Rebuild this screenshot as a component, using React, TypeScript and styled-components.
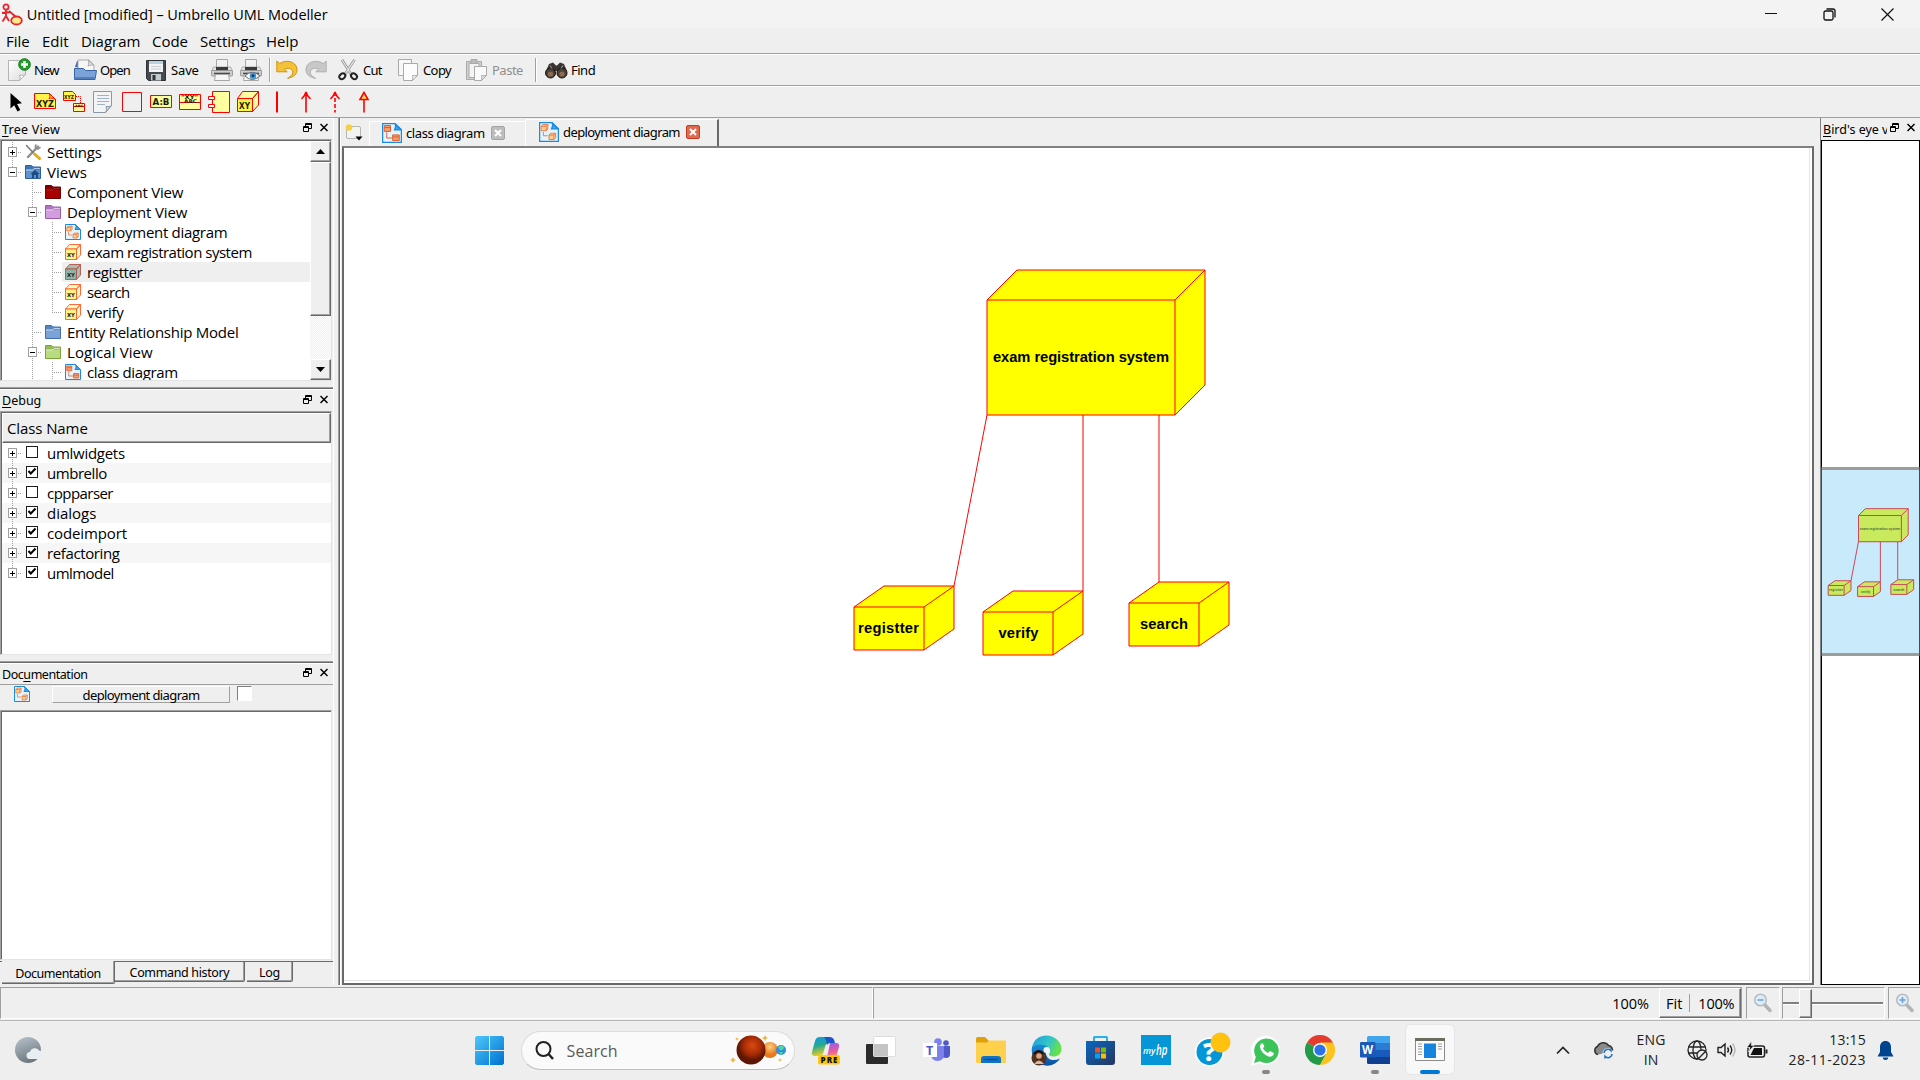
import React from 'react';
import styled, { createGlobalStyle, css } from 'styled-components';

const segoe = `"Open Sans", "Noto Sans", sans-serif`;
const tahoma = `"Noto Sans", "Open Sans", sans-serif`;

const GlobalStyle = createGlobalStyle`
  * { box-sizing: border-box; }
  body { margin: 0; background: #efefef; overflow: hidden; }
  svg { display: block; flex: none; }
`;

/* ---------- text ---------- */

const Label = styled.span<{ $ls?: number; $size?: number; $color?: string; $tahoma?: boolean; $w?: number; $top?: number }>`
  font-family: ${p => (p.$tahoma ? tahoma : segoe)};
  font-size: ${p => p.$size ?? 15}px;
  letter-spacing: ${p => p.$ls ?? 0}px;
  color: ${p => p.$color ?? '#000'};
  white-space: pre;
  line-height: 20px;
  flex: none;
  padding-top: ${p => p.$top ?? 0}px;
  ${p => p.$w !== undefined && css`width: ${p.$w}px;`}
`;

const Accel = styled.span`
  text-decoration: underline;
  text-underline-offset: 2px;
`;

/* ---------- frame ---------- */

const Screen = styled.div`
  width: 1920px;
  height: 1080px;
  display: flex;
  flex-direction: column;
  background: #efefef;
  overflow: hidden;
`;

const TitleBar = styled.header`
  height: 28px;
  flex: none;
  background: #f3f3f3;
  display: flex;
  align-items: center;
  padding-left: 1px;
`;

const WindowButtons = styled.div`
  margin-left: auto;
  display: flex;
  padding-right: 3px;
`;

const WindowButton = styled.div`
  width: 58.5px;
  height: 28px;
  display: flex;
  align-items: center;
  justify-content: center;
`;

const MenuBar = styled.nav`
  height: 26px;
  flex: none;
  display: flex;
  align-items: center;
  padding-left: 6px;
  border-bottom: 1px solid #a0a0a0;
`;

const Toolbar = styled.div<{ $pad: number }>`
  height: 32px;
  flex: none;
  display: flex;
  align-items: center;
  padding-left: ${p => p.$pad}px;
  border-top: 1px solid #fff;
  border-bottom: 1px solid #a0a0a0;
`;

const ToolButton = styled.div<{ $w: number; $gap?: number }>`
  width: ${p => p.$w}px;
  flex: none;
  display: flex;
  align-items: center;
  gap: ${p => p.$gap ?? 4}px;
`;

const ToolSeparator = styled.div<{ $after: number }>`
  width: 2px;
  height: 24px;
  flex: none;
  border-left: 1px solid #a0a0a0;
  border-right: 1px solid #fff;
  margin-right: ${p => p.$after}px;
`;

const Main = styled.div`
  height: 867px;
  flex: none;
  display: flex;
`;

/* ---------- docks ---------- */

const LeftDock = styled.aside`
  width: 334px;
  flex: none;
  display: flex;
  flex-direction: column;
  border-right: 1px solid #fff;
`;

const DockTitle = styled.div<{ $h: number; $top?: boolean }>`
  height: ${p => p.$h}px;
  flex: none;
  display: flex;
  align-items: center;
  padding: 0 5px 0 2px;
  border-top: 1px solid #fff;
  ${p => p.$top && css`box-shadow: 0 -1px #696969, 0 -2px #a0a0a0;`}
`;

const DockButtons = styled.div`
  margin-left: auto;
  display: flex;
  gap: 8px;
  padding-bottom: 3px;
`;

const Sunken = styled.div<{ $h: number }>`
  height: ${p => p.$h}px;
  width: 332px;
  flex: none;
  background: #fff;
  overflow: hidden;
  border-style: solid;
  border-width: 1px;
  border-color: #a0a0a0 #e3e3e3 #e3e3e3 #a0a0a0;
  box-shadow: inset 1px 1px #696969;
  padding: 1px 0 0 1px;
  display: flex;
`;

const Spacer = styled.div<{ $h: number }>`
  height: ${p => p.$h}px;
  flex: none;
`;

const TreeRows = styled.div`
  flex: 1;
  padding-top: 1px;
`;

const Row = styled.div<{ $alt?: boolean }>`
  height: 20px;
  display: flex;
  align-items: center;
  background: ${p => (p.$alt ? '#f6f6f6' : 'transparent')};
`;

const RowContent = styled.div<{ $selected?: boolean }>`
  flex: 1;
  height: 20px;
  display: flex;
  align-items: center;
  padding-left: 3px;
  gap: 6px;
  background: ${p => (p.$selected ? '#efefef' : 'transparent')};
`;

const ScrollBar = styled.div`
  width: 21px;
  flex: none;
  display: flex;
  flex-direction: column;
  background: repeating-conic-gradient(#fff 0 25%, #efefef 0 50%) 0 0 / 2px 2px;
`;

const raised = css`
  background: #efefef;
  border-style: solid;
  border-width: 1px;
  border-color: #fff #696969 #696969 #fff;
  box-shadow: inset -1px -1px #a0a0a0;
`;

const ScrollPart = styled.div<{ $h: number; $last?: boolean }>`
  height: ${p => p.$h}px;
  flex: none;
  ${raised}
  display: flex;
  align-items: center;
  justify-content: center;
  ${p => p.$last && css`margin-top: auto;`}
`;

const DebugList = styled.div`
  flex: 1;
`;

const ColumnHeader = styled.div`
  height: 30px;
  ${raised}
  display: flex;
  align-items: center;
  padding-left: 4px;
`;

const CheckBox = styled.div`
  width: 12px;
  height: 12px;
  border: 1px solid #1c1c1c;
  background: #fff;
  margin: 0 3px 3px 1px;
`;

const DocHeader = styled.div`
  height: 26px;
  flex: none;
  display: flex;
  align-items: flex-start;
  border-top: 1px solid #a0a0a0;
  padding: 1px 0 0 14px;
`;

const DocName = styled.div`
  width: 178px;
  height: 17px;
  margin-left: 22px;
  border: 1px solid;
  border-color: #fff #a0a0a0 #a0a0a0 #fff;
  display: flex;
  align-items: center;
  justify-content: center;
`;

const DocCheck = styled.div`
  width: 15px;
  height: 15px;
  margin: 0 0 0 7px;
  background: #fff;
  border: 1px solid;
  border-color: #808080 #fff #fff #808080;
`;

const BottomTabs = styled.div`
  height: 24px;
  margin-top: 1px;
  flex: none;
  display: flex;
  align-items: flex-start;
  padding-left: 2px;
  box-shadow: inset 0 1px #696969;
`;

const BottomTab = styled.div<{ $w: number; $active?: boolean; $gap?: number }>`
  width: ${p => p.$w}px;
  height: ${p => (p.$active ? 23 : 21)}px;
  margin-right: ${p => p.$gap ?? 0}px;
  display: flex;
  align-items: center;
  justify-content: center;
  background: #efefef;
  border-style: solid;
  border-width: ${p => (p.$active ? '0 1px 1px 0' : '1px 1px 1px 0')};
  border-color: #696969;
  border-bottom-right-radius: 2px;
  box-shadow: inset -1px -1px #a0a0a0;
`;

/* ---------- centre ---------- */

const Center = styled.main`
  width: 1476px;
  margin-left: 4px;
  flex: none;
  display: flex;
  flex-direction: column;
  border-left: 1px solid #a0a0a0;
  box-shadow: inset 1px 0 #696969, inset 2px 0 #fff;
`;

const TabStrip = styled.div`
  height: 28px;
  flex: none;
  display: flex;
  align-items: flex-end;
  padding-left: 6px;
`;

const NewTab = styled.div`
  width: 24px;
  height: 26px;
  display: flex;
  align-items: center;
`;

const DocTab = styled.div<{ $w: number; $active?: boolean }>`
  width: ${p => p.$w}px;
  height: ${p => (p.$active ? 27 : 25)}px;
  display: flex;
  align-items: center;
  padding-left: ${p => (p.$active ? 13 : 12)}px;
  padding-bottom: ${p => (p.$active ? 3 : 2)}px;
  gap: 4px;
  border-top: 1px solid #fff;
  border-left: 1px solid #fff;
  border-right: ${p => (p.$active ? '2px solid #696969' : '0')};
  border-top-left-radius: 2px;
`;

const CloseBox = styled.div<{ $hot?: boolean }>`
  width: 14px;
  height: 14px;
  margin-left: 2px;
  border-radius: 2px;
  border: 1px solid ${p => (p.$hot ? '#c63a20' : '#a4a4a4')};
  background: ${p => (p.$hot ? '#e0694f' : '#bdbdbd')};
  display: flex;
  align-items: center;
  justify-content: center;
`;

const Canvas = styled.div`
  width: 1472px;
  height: 839px;
  margin-left: 3px;
  flex: none;
  background: #fff;
  border-style: solid;
  border-width: 2px;
  border-color: #808080 #696969 #696969 #696969;
  box-shadow: inset -2px -2px #fff, inset -3px -3px #e3e3e3;
`;

const RightDock = styled.aside`
  width: 100px;
  margin-left: auto;
  flex: none;
  border-left: 1px solid #808080;
  display: flex;
  flex-direction: column;
`;

const BirdTitle = styled(DockTitle)`
  padding: 0 5px 0 2px;
  border-top: 0;
`;

const ClippedLabel = styled(Label)`
  width: 64px;
  overflow: hidden;
`;

const BirdView = styled.div`
  height: 845px;
  border: 1px solid #000;
  background: #fff;
  padding-top: 326px;
`;

const Viewport = styled.div`
  height: 189px;
  border-top: 3px solid #9d9d9d;
  border-bottom: 3px solid #9d9d9d;
  background: #c8eafa;
  box-shadow: -1px 0 #35515c, 1px 0 #35515c;
`;

/* ---------- status ---------- */

const StatusBar = styled.footer`
  height: 35px;
  flex: none;
  display: flex;
  align-items: flex-start;
  padding-top: 2px;
`;

const StatusPane = styled.div<{ $w: number; $gap?: number; $center?: boolean }>`
  width: ${p => p.$w}px;
  height: 32px;
  flex: none;
  margin-right: ${p => p.$gap ?? 0}px;
  border: 1px solid;
  border-color: #a0a0a0 #fff #fff #a0a0a0;
  display: flex;
  align-items: center;
  justify-content: ${p => (p.$center ? 'center' : 'flex-start')};
`;

const ZoomPane = styled.div`
  width: 869px;
  height: 32px;
  display: flex;
  align-items: center;
  justify-content: flex-end;
  border: 1px solid;
  border-color: #a0a0a0 #a0a0a0 #fff #a0a0a0;
  flex: none;
  margin: 0 4px 0 0;
`;

const ZoomButtons = styled.div`
  width: 82px;
  height: 30px;
  margin-left: 10px;
  ${raised}
  display: flex;
  align-items: center;
  padding-left: 6px;
`;

const Divider = styled.div`
  width: 1px;
  height: 18px;
  background: #a0a0a0;
  margin: 0 8px 0 7px;
`;

const SliderTrack = styled.div<{ $w: number }>`
  width: ${p => p.$w}px;
  height: 3px;
  background: #808080;
  border-bottom: 1px solid #fff;
`;

const SliderThumb = styled.div`
  width: 13px;
  height: 29px;
  ${raised}
`;

/* ---------- taskbar ---------- */

const Taskbar = styled.footer`
  height: 61px;
  flex: none;
  background: #eee;
  border-top: 1px solid #b9b9b9;
  display: flex;
  align-items: center;
  padding-bottom: 2px;
`;

const WeatherSlot = styled.div`
  width: 475px;
  padding-left: 14px;
  flex: none;
`;

const SearchBox = styled.div`
  width: 274px;
  height: 39px;
  margin-left: 17px;
  margin-right: 4px;
  flex: none;
  border-radius: 20px;
  background: #fafafa;
  border: 1px solid #dcdcdc;
  border-bottom-color: #bebebe;
  display: flex;
  align-items: center;
  padding: 0 7px 0 13px;
`;

const SearchArt = styled.div`
  margin-left: auto;
`;

const AppSlot = styled.div`
  width: 54.9px;
  height: 59px;
  flex: none;
  display: flex;
  flex-direction: column;
  align-items: center;
  justify-content: center;
  padding-top: 5px;
`;

const AppTile = styled.div<{ $active?: boolean }>`
  width: 48px;
  height: 38px;
  display: flex;
  align-items: center;
  justify-content: center;
  ${p => p.$active && css`
    height: 49px;
    margin: -6px 0 -5px;
    padding-bottom: 0;
    background: #f8f8f8;
    border-radius: 5px;
    box-shadow: 0 0 0 1px #e6e6e6;
  `}
`;

const RunMark = styled.div<{ $kind?: 'on' | 'active' }>`
  width: ${p => (p.$kind === 'active' ? 20 : 8)}px;
  height: 4px;
  border-radius: 2px;
  margin-top: 1px;
  background: ${p => (p.$kind === 'active' ? '#0078d4' : p.$kind === 'on' ? '#868686' : 'transparent')};
`;

const Tray = styled.div`
  margin-left: auto;
  display: flex;
  align-items: center;
  padding-right: 26px;
`;

const TrayStack = styled.div<{ $w: number; $align: string; $ml: number; $mr: number }>`
  width: ${p => p.$w}px;
  margin: 0 ${p => p.$mr}px 0 ${p => p.$ml}px;
  display: flex;
  flex-direction: column;
  align-items: ${p => p.$align};
`;

/* ---------- icons ---------- */

type IconProps = { size?: number };

const UmbrelloLogo = () => (
  <svg width="22" height="24" viewBox="0 0 22 24" fill="none" stroke="#e8242c" strokeWidth="1.8">
    <circle cx="5" cy="5" r="2.6" />
    <path d="M5 8v6M1 11l8-1M5 14l-3.5 5.500M5 14l3 5M8 9l7 6" />
    <ellipse cx="15.500" cy="18.500" rx="5.300" ry="4" fill="#ffe98a" />
  </svg>
);

const FloatIcon = () => (
  <svg width="9" height="9" viewBox="0 0 9 9" fill="none" stroke="#000">
    <path d="M2.500 3V.5h6v5H6M2.500 1.500h6" />
    <path d="M.5 3.500h5v5h-5zM.5 4.500h5" />
  </svg>
);

const CloseIcon = () => (
  <svg width="8" height="9" viewBox="0 0 8 9" stroke="#000" strokeWidth="1.500">
    <path d="M.5 1l7 7M7.500 1l-7 7" />
  </svg>
);

const NewIcon = () => (
  <svg width="23" height="24" viewBox="0 0 23 24">
    <defs>
      <linearGradient id="sheet" x2="1" y2="1"><stop offset="0" stopColor="#fff" /><stop offset="1" stopColor="#dcdcdc" /></linearGradient>
    </defs>
    <path d="M.5 2.500h17v14l-6 6H.5z" fill="url(#sheet)" stroke="#b5b5b5" />
    <path d="M11.500 22.500c1-2 .5-4 0-5.500 2 .8 4 .5 6-.5z" fill="#fafafa" stroke="#b5b5b5" />
    <circle cx="16.500" cy="6.500" r="5.800" fill="#259b2c" stroke="#157a1c" />
    <path d="M16.500 3v7M13 6.500h7" stroke="#fff" strokeWidth="2.400" />
  </svg>
);

const OpenIcon = () => (
  <svg width="23" height="22" viewBox="0 0 23 22">
    <path d="M1 8l2-6h8v8z" fill="#3d69a8" />
    <path d="M4 1h11l5 5v8H4z" fill="#f6f6f6" stroke="#a9a9a9" />
    <path d="M14 1c1 2 1 4 0 6 2-1 4-1 6-1z" fill="#e2e2e2" stroke="#a9a9a9" />
    <path d="M.5 9.500h9l2 2h11L21 20.500H.5z" fill="#7ba3d8" stroke="#3765a3" />
    <path d="M1.500 19h19" stroke="#4f7fc0" strokeWidth="2" />
  </svg>
);

const SaveIcon = () => (
  <svg width="20" height="21" viewBox="0 0 20 21">
    <path d="M.5.5h19v20h-17l-2-2z" fill="#444a50" stroke="#2f3336" />
    <rect x="3" y="1" width="14" height="11" fill="#f2f4f6" />
    <rect x="3" y="1" width="14" height="3" fill="#b8d2e4" />
    <path d="M5 6.500h10M5 9h10" stroke="#c9ced2" />
    <rect x="5" y="14" width="10" height="6.500" fill="#c4c9cd" />
    <rect x="6.500" y="15" width="3" height="5" fill="#33373b" />
  </svg>
);

const PrintIcon = ({ preview }: { preview?: boolean }) => (
  <svg width="22" height="22" viewBox="0 0 22 22">
    <path d="M5.500.5h11v9h-11z" fill="#f2f2f2" stroke="#a8a8a8" />
    <path d="M2.500 8h17l2 4H.5z" fill="#e2e2e2" stroke="#a0a0a0" strokeWidth=".8" />
    <rect x="5" y="8" width="12" height="3.500" fill="#3a3a3a" />
    <rect x=".5" y="11.500" width="21" height="5.500" rx="1" fill="#cdcdcd" stroke="#8a8a8a" strokeWidth=".8" />
    <path d="M3 14.500h16" stroke="#4a4a4a" strokeWidth="1.600" />
    <path d="M4.500 15.500h13l1 6h-15z" fill="#f6f6f6" stroke="#a8a8a8" />
    {preview && (
      <g>
        <path d="M5 17q7-7.500 15 0-8 7-15 0z" fill="#fff" stroke="#666" />
        <circle cx="13" cy="16.800" r="3.300" fill="#3f93d0" />
        <circle cx="13" cy="16.800" r="1.300" fill="#10344f" />
      </g>
    )}
  </svg>
);

const UndoIcon = ({ redo }: { redo?: boolean }) => (
  <svg width="22" height="20" viewBox="0 0 22 20">
    <g transform={redo ? 'translate(22 0) scale(-1 1)' : undefined}>
      <path
        d="M.8 1l3 2.600C9-.4 20 .5 21 9c.5 5-3.500 8.500-9.500 9.300 4-2 6-4.800 5-7.300-1.200-3-5-3.500-8-1.800l2.700 2.600H.8z"
        fill={redo ? '#c8c8c8' : '#f3c23a'}
        stroke={redo ? '#b0b0b0' : '#cf9410'}
      />
    </g>
  </svg>
);

const CutIcon = () => (
  <svg width="21" height="22" viewBox="0 0 21 22" fill="none">
    <path d="M4 .8l9 14.500M16.500.8L7 15.300" stroke="#8e8e8e" strokeWidth="2.600" />
    <path d="M4 .8l9 14.500M16.500.8L7 15.300" stroke="#e6e6e6" strokeWidth="1.200" />
    <ellipse cx="4.300" cy="17.300" rx="3.200" ry="2.500" transform="rotate(-40 4.300 17.300)" stroke="#222" strokeWidth="2" />
    <ellipse cx="16" cy="17.300" rx="3.200" ry="2.500" transform="rotate(40 16 17.300)" stroke="#222" strokeWidth="2" />
  </svg>
);

const CopyIcon = () => (
  <svg width="21" height="22" viewBox="0 0 21 22" fill="#f7f7f7" stroke="#aaa">
    <path d="M.5.5h13v12l-4 4h-9z" />
    <path d="M5.500 4.500h14v12l-5 5h-9z" fill="#fcfcfc" />
    <path d="M14.500 21.500c.5-2 .3-3.500 0-5 1.500.4 3 .3 5 0z" />
  </svg>
);

const PasteIcon = () => (
  <svg width="22" height="22" viewBox="0 0 22 22" fill="#e2e2e2" stroke="#aaa">
    <path d="M.5 2.500h15v18H.5z" fill="#cfcfcf" />
    <path d="M3 4.500h10v14H3z" fill="#f4f4f4" />
    <path d="M5 .5h6v4H5z" fill="#bbb" />
    <path d="M8.500 7.500h12v9l-5 5h-7z" fill="#fafafa" />
    <path d="M15.500 21.500c.5-2 .3-3.500 0-5 1.500.4 3 .3 5 0z" />
  </svg>
);

const FindIcon = () => (
  <svg width="23" height="17" viewBox="0 0 23 17">
    <path d="M4 2l4-1.500 3 3h1l3-3L19 2l3 7H1z" fill="#3a3532" />
    <circle cx="5.500" cy="11" r="5" fill="#4a413b" stroke="#16120f" />
    <circle cx="17" cy="11" r="5" fill="#4a413b" stroke="#16120f" />
    <circle cx="5.500" cy="12" r="2.600" fill="#8d6a4c" />
    <circle cx="17" cy="12" r="2.600" fill="#8d6a4c" />
    <path d="M5 3.500l2 3M16 6.500l2-3" stroke="#aaa" />
  </svg>
);

const PaletteSvg: React.FC<{ children: React.ReactNode }> = ({ children }) => (
  <svg width="22" height="22" viewBox="0 0 22 22" fill="none" stroke="#f00" strokeWidth="1">{children}</svg>
);

const glyph = (x: number, y: number, size: number, w: number, s: string) => (
  <text x={x} y={y} fontFamily='"DejaVu Sans", sans-serif' fontWeight="700" fontSize={size} textLength={w} lengthAdjust="spacingAndGlyphs" fill="#1c1c00" stroke="none">{s}</text>
);

const palette: React.ReactNode[] = [
  <path d="M5.500 2v15.500l3.700-3.300 3.300 6.300 2.800-1.500-3.300-6 5-.7z" fill="#000" stroke="none" />,
  <g><path d="M.5 2.500h15l6 6v9H.5z" fill="#fff24a" /><path d="M15.500 2.500c1 2.500 0 4-.5 5 2-.7 4-.5 6.500 1z" fill="#ffd21a" />{glyph(2, 15.500, 8.500, 18, 'XYZ')}</g>,
  <g><path d="M.5.5h9l3 3v6H.5z" fill="#fff24a" /><path d="M13 5.500h4.500V12" strokeDasharray="1 1" /><path d="M10.500 12.500h11v8h-11zM10.500 15.500h11" fill="#fff799" />{glyph(1, 8, 5.500, 10, 'XYZ')}{glyph(12, 15.500, 3, 8, 'ABC')}</g>,
  <g stroke="#8b98a4"><path d="M1.500.5h18v14l-6 7h-12z" fill="#f2f4f6" /><path d="M5 4.500h12M5 7.500h12M5 10.500h12M5 13.500h8" stroke="#9fb3c4" /><path d="M13.500 21.500c1.500-2 1-4 .5-6 1.500 0 4 .5 5.500-1z" fill="#cfd6dc" /></g>,
  <path d="M1.500 1.500h19v19h-19z" />,
  <g><path d="M.5 4.500h21v12H.5z" fill="#ffffa0" />{glyph(2.500, 13.500, 8.500, 17, 'A:B')}</g>,
  <g><path d="M.5 3.500h21v15H.5zM.5 11.500h21" fill="#ffffa0" />{glyph(2, 8, 5.500, 17, '"XY"')}{glyph(5, 11.500, 5, 13, 'ABC')}</g>,
  <g><path d="M4.500.5h17v21h-17z" fill="#ffffa0" /><path d="M.5 5.500h6v3h-6zM.5 13.500h6v3h-6z" fill="#fff" /></g>,
  <g><path d="M.5 7.500h15v13H.5z" fill="#fff24a" /><path d="M.5 7.500l5-7h16l-6 7zM15.500 20.500v-13l6-7V14z" fill="#ffffa0" />{glyph(2, 17.500, 8.500, 11, 'XY')}</g>,
  <path d="M11 .5v21" strokeWidth="2" />,
  <path d="M11 1v20.500M6.500 8Q10 5 11 1q1 4 4.500 7" strokeWidth="1.600" />,
  <g strokeWidth="1.600"><path d="M11 1v20.500" strokeDasharray="4 2" /><path d="M6.500 8Q10 5 11 1q1 4 4.500 7" /></g>,
  <g strokeWidth="1.600"><path d="M11 8v13.500" /><path d="M11 1.500L7 8.500h8z" fill="#ffe95a" /></g>,
];

const DiagramIcon = ({ size = 16, boxes }: IconProps & { boxes?: boolean }) => (
  <svg width={size} height={size} viewBox="0 0 16 16">
    <path d="M.5.5h10l5 5v10H.5z" fill="#e3f4ff" stroke="#1c8adf" />
    <path d="M10 .5c2 1 .5 3.500 0 5h5.500z" fill="#3ba0ec" stroke="#1c8adf" />
    {boxes ? (
      <g fill="#fbd08e" stroke="#ee7038" strokeWidth=".7">
        <path d="M1.800 3.500h4v3.500h-4zM1.800 3.500l1.300-1.500h4l-1.300 1.500M5.800 7l1.300-1.500V2" />
        <path d="M8 10.500h4V14H8zM8 10.500L9.300 9h4L12 10.500M12 14l1.300-1.500V9" />
        <path d="M3.500 8v3H7" fill="none" />
      </g>
    ) : (
      <g fill="#f59a6a" stroke="#e2622f" strokeWidth=".8">
        <path d="M1.800 2h5v4.800h-5zM8.500 9.500h5.300v4.500H8.500z" />
        <path d="M1.800 3.600h5M8.500 11.200h5.300M3.800 7.500V12H8" fill="none" />
      </g>
    )}
  </svg>
);

const FolderIcon = ({ c, d, home }: { c: string; d: string; home?: boolean }) => (
  <svg width="16" height="16" viewBox="0 0 16 16">
    <path d="M.5 14.500v-13h6l1.500 1.500h7.500v11.500z" fill={c} stroke={d} />
    <path d="M1 2h5.300l1.500 1.500H15v2H1z" fill={d} fillOpacity=".6" />
    <path d="M1 6h6.700l1.300-1.500h6" stroke="#fff" strokeOpacity={d === '#6d0000' ? 0.15 : 0.6} fill="none" />
    {home && <path d="M10 6l-4.500 4H7v4h2v-3h2v3h2v-4h1.500z" fill="#1f4a86" />}
  </svg>
);

const NodeIcon = ({ dim }: { dim?: boolean }) => (
  <svg width="16" height="16" viewBox="0 0 16 16" stroke={dim ? '#b0574c' : '#ff5a28'} strokeWidth=".9">
    <path d="M.5 5l4-4.500h11l-4 4.500zM11.500 15.500V5l4-4.500v10.500z" fill={dim ? '#a9bdb0' : '#fffbc4'} />
    <path d="M.5 5h11v10.500H.5z" fill={dim ? '#8fb3a4' : '#fff08a'} />
    <text x="2" y="12.500" fontFamily='"DejaVu Sans", sans-serif' fontWeight="700" fontSize="5.500" textLength="8" lengthAdjust="spacingAndGlyphs" fill="#222" stroke="none">XY</text>
  </svg>
);

const SettingsIcon = () => (
  <svg width="16" height="16" viewBox="0 0 16 16" fill="none" strokeLinecap="round">
    <path d="M13 2.500L3 13" stroke="#8b8f92" strokeWidth="2.400" />
    <path d="M11 1c-1.500 2 0 4 2 4l2-1.500" stroke="#8b8f92" strokeWidth="1.600" />
    <path d="M1.500 1.500L8 8.500" stroke="#777" strokeWidth="1.500" />
    <path d="M9.500 10l5 4.500" stroke="#e0a81c" strokeWidth="3" />
  </svg>
);

const Cell = ({ up, down, right, box }: { up?: boolean; down?: boolean; right?: boolean; box?: '+' | '-' }) => (
  <svg width="20" height="20" viewBox="0 0 20 20" fill="none" stroke="#a0a0a0" shapeRendering="crispEdges">
    {up && <path d="M10.500 0v10" strokeDasharray="1 1" />}
    {down && <path d="M10.500 10v10" strokeDasharray="1 1" />}
    {right && <path d="M10 10.500h10" strokeDasharray="1 1" />}
    {box && (
      <g>
        <path d="M6.500 5.500h8v9h-8z" fill="#fff" />
        <path d={box === '+' ? 'M8 10.500h5M10.500 8v5' : 'M8 10.500h5'} stroke="#000" />
      </g>
    )}
  </svg>
);

const CheckMark = () => (
  <svg width="10" height="10" viewBox="0 0 10 10" fill="none" stroke="#000" strokeWidth="2">
    <path d="M1.500 4l2.300 2.500L8.500 1.500" />
  </svg>
);

const Magnifier = ({ plus }: { plus?: boolean }) => (
  <svg width="20" height="20" viewBox="0 0 20 20" fill="none">
    <path d="M11 11l6 6.500" stroke="#b4b4b4" strokeWidth="3.500" strokeLinecap="round" />
    <circle cx="7.500" cy="7" r="5.800" fill="#dcecf8" stroke="#b6bcc2" strokeWidth="1.500" />
    <path d={plus ? 'M4.500 7h6M7.500 4v6' : 'M4.500 7h6'} stroke="#6ba0d0" strokeWidth="1.500" />
  </svg>
);

const TabCross = () => (
  <svg width="8" height="8" stroke="#fff" strokeWidth="2"><path d="M1 1l6 6M7 1L1 7" /></svg>
);

/* ---------- diagram ---------- */

type Box = { name: string; x: number; y: number; w: number; h: number; dx: number; dy: number; tx: number; ty: number; tw: number };

const boxes: Box[] = [
  { name: 'exam registration system', x: 987, y: 300, w: 188, h: 115, dx: 30, dy: 30, tx: 993, ty: 362, tw: 176 },
  { name: 'registter', x: 854, y: 607, w: 70, h: 43, dx: 30, dy: 21, tx: 858, ty: 633, tw: 61 },
  { name: 'verify', x: 983, y: 612, w: 70, h: 43, dx: 30, dy: 21, tx: 998.5, ty: 638, tw: 40 },
  { name: 'search', x: 1129, y: 603, w: 70, h: 43, dx: 30, dy: 21, tx: 1140, ty: 629, tw: 48 },
];

const outline = (b: Box) =>
  `M${b.x} ${b.y + b.h}V${b.y}l${b.dx} ${-b.dy}h${b.w}v${b.h}l${-b.dx} ${b.dy}z`;
const edges = (b: Box) =>
  `M${b.x} ${b.y}h${b.w}v${b.h}M${b.x + b.w} ${b.y}l${b.dx} ${-b.dy}`;

const Deployment = ({ fill, stroke, text }: { fill: string; stroke: string; text: string }) => (
  <g strokeWidth="1" stroke={stroke}>
    <path d="M987 415L954 586M1083 415V591M1159 415V582" fill="none" vectorEffect="non-scaling-stroke" />
    {boxes.map(b => (
      <g key={b.name}>
        <path fill={fill} vectorEffect="non-scaling-stroke" d={outline(b)} />
        <path fill="none" vectorEffect="non-scaling-stroke" d={edges(b)} />
        <text x={b.tx} y={b.ty} textLength={b.tw} fontFamily='"Liberation Sans", Arial, sans-serif' fontWeight="700" fontSize="14.700" fill={text} stroke="none">{b.name}</text>
      </g>
    ))}
  </g>
);

/* ---------- taskbar art ---------- */

const Weather = () => (
  <svg width="30" height="28" viewBox="0 0 30 28">
    <defs><linearGradient id="moon" x2=".4" y2="1"><stop offset="0" stopColor="#b9c4ce" /><stop offset="1" stopColor="#6f7981" /></linearGradient></defs>
    <circle cx="14" cy="14" r="13" fill="url(#moon)" />
    <path d="M16 23a3.500 3.500 0 010-7 5 5 0 019-1.500 4 4 0 010 8.500z" fill="#e9eef2" />
  </svg>
);

const StartLogo = () => (
  <svg width="29" height="29" viewBox="0 0 29 29">
    <defs><linearGradient id="win" x2="1" y2="1"><stop offset="0" stopColor="#4cc8fb" /><stop offset="1" stopColor="#0070d0" /></linearGradient></defs>
    <path d="M1.500 0H14v14H0V1.500zM15 0h12.500L29 1.500V14H15zM0 15h14v14H1.500L0 27.500zM15 15h14v12.500L27.500 29H15z" fill="url(#win)" />
  </svg>
);

const SearchGlass = () => (
  <svg width="19" height="19" viewBox="0 0 19 19" fill="none" stroke="#222" strokeWidth="2">
    <circle cx="8.500" cy="8" r="7" /><path d="M13.500 13l4.500 5" strokeWidth="2.500" />
  </svg>
);

const Planets = () => (
  <svg width="58" height="32" viewBox="0 0 58 32">
    <defs>
      <radialGradient id="mars" cx=".55" cy=".35"><stop offset="0" stopColor="#d94a10" /><stop offset=".6" stopColor="#a82c06" /><stop offset="1" stopColor="#5c1603" /></radialGradient>
      <radialGradient id="sun" cx=".5" cy=".3"><stop offset="0" stopColor="#ffd080" /><stop offset="1" stopColor="#e8781c" /></radialGradient>
    </defs>
    <circle cx="41" cy="16" r="8" fill="url(#sun)" />
    <circle cx="52" cy="16" r="5" fill="#2f8ede" />
    <path d="M49 13q4-3 6 0-1 4-4 3zM50 18l4 0-2 3z" fill="#52d6a4" />
    <circle cx="22" cy="16" r="14.500" fill="url(#mars)" />
    <path d="M4 23l1 2 2 1-2 1-1 2-1-2-2-1 2-1zM36 1l1 2 2 1-2 1-1 2-1-2-2-1 2-1zM8 3l.6 1.200L10 5l-1.400.6L8 7l-.6-1.400L6 5l1.400-.8zM51 24l.6 1.200L53 26l-1.400.6L51 28l-.6-1.400L49 26l1.400-.8z" fill="#edb73c" />
  </svg>
);

const Copilot = () => (
  <svg width="30" height="30" viewBox="0 0 30 30">
    <defs>
      <linearGradient id="cpA" x2=".3" y2="1"><stop offset="0" stopColor="#1597e8" /><stop offset=".5" stopColor="#25a98f" /><stop offset="1" stopColor="#f2cf1a" /></linearGradient>
      <linearGradient id="cpB" x2=".2" y2="1"><stop offset="0" stopColor="#8b5cf0" /><stop offset=".6" stopColor="#e85aa4" /><stop offset="1" stopColor="#f98d58" /></linearGradient>
    </defs>
    <path d="M9 2h9q4 0 5 6h-5q-3 0-4 4l-2 7q-1 2-4 2H4q-4 0-3-4l3-11q1-4 5-4z" fill="url(#cpA)" />
    <path d="M13 2h6q4 0 5 6h-5q-2 0-3 2-1-6-3-8z" fill="#1b57c9" />
    <path d="M19 8h6q4 0 3 4l-2 7q-1 4-4 4h-8q2-1 3-5z" fill="url(#cpB)" />
    <rect x="7" y="20" width="22" height="9.500" rx="2" fill="#ffc60a" />
    <text x="9.500" y="27.700" fontFamily={segoe} fontWeight="800" fontSize="8" textLength="17" fill="#111">PRE</text>
  </svg>
);

const TaskView = () => (
  <svg width="30" height="28" viewBox="0 0 30 28">
    <rect x="0" y="8" width="22" height="20" rx="1" fill="#2b2b2b" />
    <rect x="7.500" y=".5" width="22" height="20" rx="1" fill="#fff" stroke="#ddd" />
    <rect x="8" y="8" width="14" height="12" fill="#c4c4c4" />
  </svg>
);

const Teams = () => (
  <svg width="27" height="26" viewBox="0 0 27 26">
    <circle cx="15" cy="5" r="3.800" fill="#7b83eb" /><circle cx="23" cy="6" r="2.800" fill="#5059c9" />
    <path d="M17 9h10v8q0 4-4 4-3 0-6-2z" fill="#5059c9" />
    <path d="M8 9h13v8q0 7-6.500 7T8 17z" fill="#7b83eb" />
    <rect x="0" y="6" width="14" height="14" fill="#fff" />
    <text x="3" y="17.500" fontFamily={segoe} fontWeight="700" fontSize="12.500" fill="#5059c9">T</text>
  </svg>
);

const Explorer = () => (
  <svg width="30" height="27" viewBox="0 0 30 27">
    <path d="M0 1.500L1 0h8l4 4h17v8H0z" fill="#dfa00a" />
    <path d="M0 5.500h11l2-2h16l1 1V26H0z" fill="#ffd04c" />
    <path d="M5 26v-4q0-3 3-3h14q3 0 3 3v4z" fill="#1173c6" /><path d="M8.500 22.500h13" stroke="#0a4b86" strokeWidth="1.300" />
  </svg>
);

const Edge = () => (
  <svg width="31" height="31" viewBox="0 0 31 31">
    <defs>
      <linearGradient id="edA" x2="1" y2=".4"><stop offset="0" stopColor="#1d9ce0" /><stop offset=".6" stopColor="#33c6c8" /><stop offset="1" stopColor="#68e04c" /></linearGradient>
      <linearGradient id="edB" x2="0" y2="1"><stop offset="0" stopColor="#1893dc" /><stop offset="1" stopColor="#0c4ea0" /></linearGradient>
    </defs>
    <path d="M1 12Q-.5 22 6 27q9 6.500 18 1.500 3.500-2 5-5-4 2-8 1.500-5-1-6-6-1-6 3-8Q10 5 1 12z" fill="url(#edB)" />
    <path d="M1 12C3 4 9 .5 15.500.5 24 .5 30.500 7 30.500 14c0 5-4 7.500-8 7.500-3 0-5-1-4.500-2.500 1.500-1.500 1.500-4 0-6C15 9 6 8 1 12z" fill="url(#edA)" />
    <circle cx="15.500" cy="15" r="3" fill="#eef4fa" />
    <circle cx="8" cy="23" r="7.500" fill="#54301f" /><circle cx="8" cy="21" r="2.800" fill="#dca784" /><path d="M3 29q5-7 10 0z" fill="#d8b7a4" /><path d="M3 19q5-6 9 0" stroke="#1c0e08" strokeWidth="2" fill="none" />
  </svg>
);

const Store = () => (
  <svg width="29" height="29" viewBox="0 0 29 29">
    <defs><linearGradient id="st" x2="1" y2="1"><stop offset="0" stopColor="#0a68c0" /><stop offset="1" stopColor="#243561" /></linearGradient></defs>
    <path d="M8 6V1.500Q8 1 8.500 1h12q.5 0 .5.500V6" fill="none" stroke="#27b0ee" strokeWidth="2" />
    <path d="M0 5h29v21q0 3-3 3H3q-3 0-3-3z" fill="url(#st)" />
    <path d="M9 11.500h5v5H9z" fill="#f25022" /><path d="M15 11.500h5v5h-5z" fill="#7fba00" /><path d="M9 17.500h5v5H9z" fill="#00a4ef" /><path d="M15 17.500h5v5h-5z" fill="#ffb900" />
  </svg>
);

const MyHp = () => (
  <svg width="30" height="30" viewBox="0 0 30 30">
    <rect width="30" height="30" fill="#0496d6" />
    <text x="2" y="18.500" fontFamily={segoe} fontSize="9" fontWeight="600" fontStyle="italic" textLength="12.500" fill="#fff">my</text>
    <text x="15" y="19.500" fontFamily={segoe} fontSize="14.500" fontWeight="600" fontStyle="italic" textLength="11.500" lengthAdjust="spacingAndGlyphs" fill="#fff">hp</text>
  </svg>
);

const HelpApp = () => (
  <svg width="40" height="36" viewBox="-4 0 40 36">
    <circle cx="14.500" cy="20" r="14.500" fill="#fff" /><circle cx="14.500" cy="20" r="13" fill="#0496d6" />
    <text x="8" y="29" fontFamily={segoe} fontSize="25" fontWeight="800" fill="#fff">?</text>
    <circle cx="25.500" cy="10.500" r="10" fill="#ffc20e" />
  </svg>
);

const WhatsApp = () => (
  <svg width="30" height="31" viewBox="0 0 30 31">
    <path d="M0 30.500l2.200-7.700A14.500 14.500 0 118.500 28.500z" fill="#fff" />
    <path d="M3 28l1.800-6A12.300 12.300 0 119 26.300z" fill="#3cc45a" />
    <path d="M10.500 8.500q-2 1.500-1.500 4 1.500 6 8.500 9 3 .8 5-1.800l.2-1.700-3.700-1.900-2 2q-3.500-1.500-5-4.800l1.400-1.800-1.600-3.300z" fill="#fff" />
  </svg>
);

const Chrome = () => (
  <svg width="30" height="30" viewBox="0 0 30 30">
    <path d="M15 15L2 7.500A15 15 0 0128 7.500z" fill="#e33b2e" />
    <path d="M15 15L2 7.500A15 15 0 0015 30l6.500-11.500z" fill="#229a48" />
    <path d="M15 7.500h13A15 15 0 0115 30l6.500-11.500z" fill="#fcc31e" />
    <circle cx="15" cy="15" r="7" fill="#fff" /><circle cx="15" cy="15" r="5.600" fill="#2d72e8" />
  </svg>
);

const Word = () => (
  <svg width="30" height="28" viewBox="0 0 30 28">
    <path d="M7 1.500Q7 0 8.500 0H30v7H7z" fill="#41a5ee" /><path d="M7 7h23v7H7z" fill="#2b7cd3" /><path d="M7 14h23v7H7z" fill="#185abd" /><path d="M7 21h23v7H8.500Q7 28 7 26.500z" fill="#103f91" />
    <rect x="0" y="6" width="15.500" height="15.500" rx="1.300" fill="#1b58b8" />
    <text x="2" y="18" fontFamily={segoe} fontWeight="700" fontSize="11.500" textLength="11.500" fill="#fff">W</text>
  </svg>
);

const WindowApp = () => (
  <svg width="30" height="24" viewBox="0 0 30 24">
    <path d="M.5 1h29v21.500H.5z" fill="#fbfbfb" stroke="#8b8b8b" /><path d="M0 1.500h30" stroke="#6b6b60" strokeWidth="3" />
    <path d="M3 6h4M3 8.500h4M3 11h4M3 14h4M3 16.500h4M23 6h4M23 8.500h4M23 11h4" stroke="#999" />
    <rect x="9" y="5.500" width="12" height="14.500" fill="#1684de" />
  </svg>
);

const Cloud = () => (
  <svg width="21" height="19" viewBox="0 0 21 19">
    <path d="M5 13.500a4.200 4.200 0 01-.5-8 6.300 6.300 0 0111-1A4.500 4.500 0 0119 11" fill="#8a8a8a" stroke="#333" strokeWidth="1.500" />
    <circle cx="15" cy="12.500" r="5.500" fill="#eee" />
    <path d="M11 12a4 4 0 017-2.300V7.500M19 13a4 4 0 01-7 2.300v2.200" fill="none" stroke="#1a74c8" strokeWidth="1.500" />
  </svg>
);

const Globe = () => (
  <svg width="21" height="21" viewBox="0 0 21 21" fill="none" stroke="#222" strokeWidth="1.300">
    <circle cx="10" cy="10" r="9" /><ellipse cx="10" cy="10" rx="4" ry="9" /><path d="M1.500 7h17M1.500 13h17" />
    <circle cx="15" cy="15" r="5" fill="#eee" stroke="#222" /><path d="M11.800 18.200l6.400-6.400" />
  </svg>
);

const Speaker = () => (
  <svg width="20" height="16" viewBox="0 0 20 16" fill="none" stroke="#222" strokeWidth="1.400">
    <path d="M1 5.500h3L8 2v12l-4-3.500H1zM10.500 5.500q2 2.500 0 5M13 3.500q3.500 4.500 0 9" /><path d="M15.500 1.500q5 6.500 0 13" stroke="#b5b5b5" />
  </svg>
);

const Battery = () => (
  <svg width="21" height="18" viewBox="0 0 21 18">
    <rect x="1" y="5" width="16.500" height="11" rx="2" fill="none" stroke="#222" strokeWidth="1.500" />
    <path d="M3.500 14L7 7h8v7z" fill="#111" /><path d="M18.500 8.500h2v4h-2z" fill="#222" />
    <path d="M4.500 0L0 6.500h3L1.500 11 7 4.500H4.300z" fill="#111" stroke="#eee" strokeWidth=".7" />
  </svg>
);

const Bell = () => (
  <svg width="17" height="19" viewBox="0 0 17 19" fill="#00438f">
    <path d="M8.500 0C12 0 14 2.700 14 6v5l2.500 4.500H.5L3 11V6C3 2.700 5 0 8.500 0zM5.800 16.500h5.400a2.700 2.400 0 01-5.400 0z" />
  </svg>
);

/* ---------- data ---------- */

type Guide = 'none' | 'line' | 'tee' | 'end' | '+' | '-';
const guideCell = (g: Guide, i: number) => {
  if (g === 'none') return <Cell key={i} />;
  if (g === 'line') return <Cell key={i} up down />;
  if (g === 'tee') return <Cell key={i} up down right />;
  if (g === 'end') return <Cell key={i} up right />;
  return <Cell key={i} up down={g === '+' || i > 0} right box={g} />;
};

const tree: { text: string; guides: Guide[]; icon: React.ReactNode; selected?: boolean; ls: number }[] = [
  { text: 'Settings', guides: ['+'], icon: <SettingsIcon />, ls: -0.1 },
  { text: 'Views', guides: ['-'], icon: <FolderIcon c="#5d93cf" d="#2c5f9e" home />, ls: 0 },
  { text: 'Component View', guides: ['none', 'tee'], icon: <FolderIcon c="#a80000" d="#6d0000" />, ls: -0.23 },
  { text: 'Deployment View', guides: ['none', '-'], icon: <FolderIcon c="#d39be0" d="#9a5cab" />, ls: -0.14 },
  { text: 'deployment diagram', guides: ['none', 'line', 'tee'], icon: <DiagramIcon boxes />, ls: -0.3 },
  { text: 'exam registration system', guides: ['none', 'line', 'tee'], icon: <NodeIcon />, ls: -0.49 },
  { text: 'registter', guides: ['none', 'line', 'tee'], icon: <NodeIcon dim />, selected: true, ls: -0.4 },
  { text: 'search', guides: ['none', 'line', 'tee'], icon: <NodeIcon />, ls: -0.65 },
  { text: 'verify', guides: ['none', 'line', 'end'], icon: <NodeIcon />, ls: -0.35 },
  { text: 'Entity Relationship Model', guides: ['none', 'tee'], icon: <FolderIcon c="#7ba3d8" d="#3f6fae" />, ls: -0.25 },
  { text: 'Logical View', guides: ['none', '-'], icon: <FolderIcon c="#b8dc82" d="#7da23a" />, ls: 0.08 },
  { text: 'class diagram', guides: ['none', 'line', 'tee'], icon: <DiagramIcon />, ls: -0.35 },
];

const debugItems: [string, boolean, number][] = [
  ['umlwidgets', false, -0.27],
  ['umbrello', true, -0.45],
  ['cppparser', false, -0.55],
  ['dialogs', true, 0],
  ['codeimport', true, -0.13],
  ['refactoring', true, -0.38],
  ['umlmodel', true, -0.55],
];

const menus: [string, number][] = [['File', 36], ['Edit', 39], ['Diagram', 71], ['Code', 48], ['Settings', 66], ['Help', 50]];

const apps: { icon: React.ReactNode; mark?: 'on' | 'active' }[] = [
  { icon: <Copilot /> },
  { icon: <TaskView /> },
  { icon: <Teams /> },
  { icon: <Explorer /> },
  { icon: <Edge /> },
  { icon: <Store /> },
  { icon: <MyHp /> },
  { icon: <HelpApp /> },
  { icon: <WhatsApp />, mark: 'on' },
  { icon: <Chrome /> },
  { icon: <Word />, mark: 'on' },
  { icon: <WindowApp />, mark: 'active' },
];

const DockControls = () => (
  <DockButtons>
    <FloatIcon />
    <CloseIcon />
  </DockButtons>
);

export default function App() {
  return (
    <Screen>
      <GlobalStyle />
      <TitleBar>
        <UmbrelloLogo />
        <Label $size={14.5} $ls={-0.08} $top={1}>{' Untitled [modified] – Umbrello UML Modeller'}</Label>
        <WindowButtons>
          <WindowButton><svg width="12" height="2"><path d="M0 .5h12" stroke="#111" /></svg></WindowButton>
          <WindowButton>
            <svg width="13" height="13" viewBox="0 0 13 13" fill="none" stroke="#111" strokeWidth="1.300">
              <rect x="1" y="3" width="9" height="9" rx="1.500" /><path d="M3.500 1h6.500q2 0 2 2v6.500" />
            </svg>
          </WindowButton>
          <WindowButton><svg width="13" height="13" viewBox="0 0 13 13" stroke="#111" strokeWidth="1.200"><path d="M.5.5l12 12M12.500.5l-12 12" /></svg></WindowButton>
        </WindowButtons>
      </TitleBar>
      <MenuBar>
        {menus.map(([m, w]) => <Label key={m} $w={w} $size={15} $ls={-0.03}>{m}</Label>)}
      </MenuBar>
      <Toolbar $pad={8}>
        <ToolButton $w={66} $gap={3}><NewIcon /><Label $tahoma $size={13} $ls={-0.9}>New</Label></ToolButton>
        <ToolButton $w={72} $gap={3}><OpenIcon /><Label $tahoma $size={13} $ls={-0.9}>Open</Label></ToolButton>
        <ToolButton $w={65} $gap={5}><SaveIcon /><Label $tahoma $size={13} $ls={-0.15}>Save</Label></ToolButton>
        <ToolButton $w={29}><PrintIcon /></ToolButton>
        <ToolButton $w={29}><PrintIcon preview /></ToolButton>
        <ToolSeparator $after={5} />
        <ToolButton $w={29}><UndoIcon /></ToolButton>
        <ToolButton $w={33}><UndoIcon redo /></ToolButton>
        <ToolButton $w={60}><CutIcon /><Label $tahoma $size={13} $ls={-0.7}>Cut</Label></ToolButton>
        <ToolButton $w={68}><CopyIcon /><Label $tahoma $size={13} $ls={-0.6}>Copy</Label></ToolButton>
        <ToolButton $w={69}><PasteIcon /><Label $tahoma $size={13} $ls={-0.5} $color="#8f8f8f">Paste</Label></ToolButton>
        <ToolSeparator $after={8} />
        <ToolButton $w={60} $gap={3}><FindIcon /><Label $tahoma $size={13} $ls={-0.5}>Find</Label></ToolButton>
      </Toolbar>
      <Toolbar $pad={5}>
        {palette.map((icon, i) => <ToolButton key={i} $w={29}><PaletteSvg>{icon}</PaletteSvg></ToolButton>)}
      </Toolbar>

      <Main>
        <LeftDock>
          <DockTitle $h={21}>
            <Label $tahoma $size={12.5} $ls={0.25} $top={2}><Accel>T</Accel>ree View</Label>
            <DockControls />
          </DockTitle>
          <Sunken $h={242}>
            <TreeRows>
              {tree.map((r, i) => (
                <Row key={i}>
                  {r.guides.map(guideCell)}
                  <RowContent $selected={r.selected}>
                    {r.icon}
                    <Label $size={15} $ls={r.ls}>{r.text}</Label>
                  </RowContent>
                </Row>
              ))}
            </TreeRows>
            <ScrollBar>
              <ScrollPart $h={21}><svg width="9" height="5"><path d="M0 5L4.500 0 9 5z" /></svg></ScrollPart>
              <ScrollPart $h={154} />
              <ScrollPart $h={21} $last><svg width="9" height="5"><path d="M0 0l4.500 5L9 0z" /></svg></ScrollPart>
            </ScrollBar>
          </Sunken>
          <Spacer $h={8} />
          <DockTitle $h={22} $top>
            <Label $tahoma $size={12.5}><Accel>D</Accel>ebug</Label>
            <DockControls />
          </DockTitle>
          <Sunken $h={244}>
            <DebugList>
              <ColumnHeader><Label $size={15} $ls={-0.1}>Class Name</Label></ColumnHeader>
              {debugItems.map(([name, on, ls], i) => (
                <Row key={name} $alt={i % 2 === 1}>
                  <Cell up={i > 0} down={i < 6} right box="+" />
                  <RowContent>
                    <CheckBox>{on && <CheckMark />}</CheckBox>
                    <Label $size={15} $ls={ls}>{name}</Label>
                  </RowContent>
                </Row>
              ))}
            </DebugList>
          </Sunken>
          <Spacer $h={8} />
          <DockTitle $h={21} $top>
            <Label $tahoma $size={12.5} $ls={-0.45} $top={2}>Doc<Accel>u</Accel>mentation</Label>
            <DockControls />
          </DockTitle>
          <DocHeader>
            <DiagramIcon boxes />
            <DocName><Label $tahoma $size={13} $ls={-0.6}>deployment diagram</Label></DocName>
            <DocCheck />
          </DocHeader>
          <Sunken $h={250} />
          <BottomTabs>
            <BottomTab $w={113} $active><Label $tahoma $size={12.5} $ls={-0.45} $top={3}>Documentation</Label></BottomTab>
            <BottomTab $w={130} $gap={2}><Label $tahoma $size={12.5} $ls={-0.35} $top={2}>Command history</Label></BottomTab>
            <BottomTab $w={46}><Label $tahoma $size={12.5} $ls={-0.3} $top={2}>Log</Label></BottomTab>
          </BottomTabs>
        </LeftDock>

        <Center>
          <TabStrip>
            <NewTab>
              <svg width="18" height="18" viewBox="0 0 18 18">
                <rect x="1.500" y="2.500" width="14" height="12" rx="1.500" fill="#f3f3f3" stroke="#b5b5b5" />
                <circle cx="4" cy="3.500" r="3.200" fill="#f6cf3e" /><path d="M10.500 12.500h7l-3.500 4z" />
              </svg>
            </NewTab>
            <DocTab $w={156}><DiagramIcon size={20} /><Label $tahoma $size={13} $ls={-0.4}>class diagram</Label><CloseBox><TabCross /></CloseBox></DocTab>
            <DocTab $w={194} $active><DiagramIcon size={20} boxes /><Label $tahoma $size={13} $ls={-0.6}>deployment diagram</Label><CloseBox $hot><TabCross /></CloseBox></DocTab>
          </TabStrip>
          <Canvas>
            <svg width="1467" height="833" viewBox="344 148 1467 833">
              <Deployment fill="#ff0" stroke="#f00" text="#000" />
            </svg>
          </Canvas>
        </Center>

        <RightDock>
          <BirdTitle $h={22}>
            <ClippedLabel $tahoma $size={12.5} $top={2}><Accel>B</Accel>ird's eye view</ClippedLabel>
            <DockControls />
          </BirdTitle>
          <BirdView>
            <Viewport>
              <svg width="96" height="183" viewBox="1822 470 96 183">
                <g transform="translate(1858.500 515.500) scale(.228) translate(-987 -300)">
                  <Deployment fill="#c8ea5c" stroke="#c9485c" text="#4a6a3a" />
                </g>
              </svg>
            </Viewport>
          </BirdView>
        </RightDock>
      </Main>

      <StatusBar>
        <StatusPane $w={873} />
        <ZoomPane>
          <Label $size={14.5} $top={1}>100%</Label>
          <ZoomButtons>
            <Label $size={14.5} $top={1}>Fit</Label>
            <Divider />
            <Label $size={14.5} $top={1} $ls={-0.2}>100%</Label>
          </ZoomButtons>
        </ZoomPane>
        <StatusPane $w={34} $gap={2} $center><Magnifier /></StatusPane>
        <StatusPane $w={103} $gap={3}>
          <SliderTrack $w={16} /><SliderThumb /><SliderTrack $w={71} />
        </StatusPane>
        <StatusPane $w={34} $center><Magnifier plus /></StatusPane>
      </StatusBar>

      <Taskbar>
        <WeatherSlot><Weather /></WeatherSlot>
        <StartLogo />
        <SearchBox>
          <SearchGlass />
          <Label $size={16} $color="#5a5a5a" $ls={0.05} $top={1}>{'   Search'}</Label>
          <SearchArt><Planets /></SearchArt>
        </SearchBox>
        {apps.map((a, i) => (
          <AppSlot key={i}>
            <AppTile $active={a.mark === 'active'}>{a.icon}</AppTile>
            <RunMark $kind={a.mark} />
          </AppSlot>
        ))}
        <Tray>
          <svg width="14" height="9" viewBox="0 0 14 9" fill="none" stroke="#222" strokeWidth="1.700"><path d="M1 7.500l6-6 6 6" /></svg>
          <TrayStack $w={20} $align="center" $ml={23} $mr={18}><Cloud /></TrayStack>
          <TrayStack $w={40} $align="center" $ml={0} $mr={16}>
            <Label $size={14} $color="#222" $ls={0.15}>ENG</Label>
            <Label $size={14} $color="#222">IN</Label>
          </TrayStack>
          <Globe />
          <TrayStack $w={20} $align="center" $ml={9} $mr={10}><Speaker /></TrayStack>
          <Battery />
          <TrayStack $w={78} $align="flex-end" $ml={20} $mr={11}>
            <Label $size={14} $color="#222" $ls={0.2}>13:15</Label>
            <Label $size={14} $color="#222" $ls={0.45}>28-11-2023</Label>
          </TrayStack>
          <Bell />
        </Tray>
      </Taskbar>
    </Screen>
  );
}
